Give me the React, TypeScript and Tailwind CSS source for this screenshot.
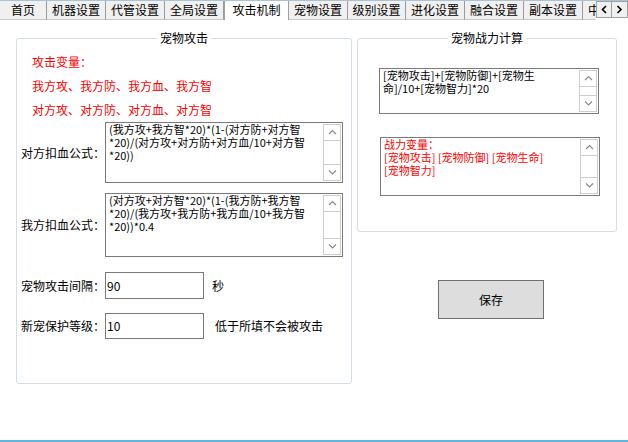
import React from "react";

const tabs: { label: string; w: string; active?: boolean }[] = [
  { label: "首页", w: "w-[47px]" },
  { label: "机器设置", w: "w-[59px]" },
  { label: "代管设置", w: "w-[59px]" },
  { label: "全局设置", w: "w-[59px]" },
  { label: "攻击机制", w: "w-[65px]", active: true },
  { label: "宠物设置", w: "w-[59px]" },
  { label: "级别设置", w: "w-[58px]" },
  { label: "进化设置", w: "w-[59px]" },
  { label: "融合设置", w: "w-[59px]" },
  { label: "副本设置", w: "w-[59px]" },
];

function Chevron({ dir }: { dir: "up" | "down" | "left" | "right" }) {
  const d = {
    up: "M1 5 L4.5 1.5 L8 5",
    down: "M1 1.5 L4.5 5 L8 1.5",
    left: "M5 1 L1.5 4.5 L5 8",
    right: "M1.5 1 L5 4.5 L1.5 8",
  }[dir];
  const vertical = dir === "up" || dir === "down";
  return (
    <svg
      width={vertical ? 9 : 7}
      height={vertical ? 7 : 9}
      viewBox={vertical ? "0 0 9 7" : "0 0 7 9"}
      fill="none"
      stroke={vertical ? "#8a8a8a" : "#000"}
      strokeWidth={vertical ? 1.2 : 1.6}
    >
      <path d={d} />
    </svg>
  );
}

// textarea look-alike with a classic vertical scrollbar
function ScrollBox({
  lines,
  className,
  red,
}: {
  lines: string[];
  className: string;
  red?: boolean;
}) {
  return (
    <div className={`flex shrink-0 border border-[#7a7a7a] bg-white ${className}`}>
      <div
        className={`flex-1 min-w-0 overflow-hidden pl-[3px] text-[11px] leading-[13px] ${
          red ? "text-[#ff0000]" : "text-black"
        }`}
      >
        {lines.map((l, i) => (
          <div key={i} className="whitespace-pre">
            {l}
          </div>
        ))}
      </div>
      <div className="w-[18px] shrink-0 flex flex-col border border-[#cdcdcd] m-px">
        <div className="h-[16px] flex items-center justify-center border-b border-[#cdcdcd]">
          <Chevron dir="up" />
        </div>
        <div className="flex-1" />
        <div className="h-[16px] flex items-center justify-center border-t border-[#cdcdcd]">
          <Chevron dir="down" />
        </div>
      </div>
    </div>
  );
}

function Label({ children }: { children: React.ReactNode }) {
  return (
    <div className="w-[88px] shrink-0 flex justify-end whitespace-nowrap">{children}</div>
  );
}

export default function App() {
  return (
    <div className="w-[628px] h-[442px] bg-white flex flex-col overflow-hidden font-['Noto_Sans_CJK_SC','Noto_Sans',sans-serif] text-[12px] text-black">
      {/* Tabs */}
      <div className="h-[20px] flex shrink-0 border-t border-[#a9c3d6]">
        {tabs.map((t) => (
          <div
            key={t.label}
            className={`${t.w} shrink-0 text-center text-[12px] ${
              t.active
                ? "h-[19px] leading-[18px] bg-white border-x border-[#a0a0a0]"
                : "h-[19px] leading-[18px] bg-[#f0f0f0] border-r border-[#9a9a9a] border-b border-b-[#c8c8c8]"
            }`}
          >
            {t.label}
          </div>
        ))}
        <div className="w-[13px] shrink-0 h-[19px] overflow-hidden bg-[#f0f0f0] border-b border-[#c8c8c8] pl-[5px] leading-[18px] whitespace-nowrap">
          中
        </div>
        <div className="w-[16px] h-[17px] shrink-0 flex items-center justify-center bg-[#f0f0f0] border border-[#a0a0a0]">
          <Chevron dir="left" />
        </div>
        <div className="w-[16px] h-[17px] shrink-0 flex items-center justify-center bg-[#f0f0f0] border border-[#a0a0a0] border-l-0">
          <Chevron dir="right" />
        </div>
      </div>

      {/* Page */}
      <div className="flex-1 flex items-start pt-[10px] pl-[16px]">
        <fieldset className="w-[336px] h-[354px] border border-[#d5dfe5] rounded-[3px]">
          <legend className="mx-auto px-[3px] leading-[16px]">宠物攻击</legend>
          <div className="pt-[4px] pl-[15px] text-[#ff0000]">
            <div className="h-[24px] leading-[24px]">攻击变量：</div>
            <div className="h-[24px] leading-[24px]">我方攻、我方防、我方血、我方智</div>
            <div className="h-[24px] leading-[24px]">对方攻、对方防、对方血、对方智</div>
          </div>

          <div className="flex items-center">
            <Label>对方扣血公式：</Label>
            <ScrollBox
              className="w-[238px] h-[61px]"
              lines={[
                "(我方攻+我方智*20)*(1-(对方防+对方智",
                "*20)/(对方攻+对方防+对方血/10+对方智",
                "*20))",
              ]}
            />
          </div>

          <div className="flex items-center mt-[10px]">
            <Label>我方扣血公式：</Label>
            <ScrollBox
              className="w-[238px] h-[64px]"
              lines={[
                "(对方攻+对方智*20)*(1-(我方防+我方智",
                "*20)/(我方攻+我方防+我方血/10+我方智",
                "*20))*0.4",
              ]}
            />
          </div>

          <div className="flex items-center mt-[15px]">
            <Label>宠物攻击间隔：</Label>
            <div className="w-[99px] h-[27px] shrink-0 border border-[#7a7a7a] pl-[1px] leading-[25px]">90</div>
            <div className="ml-[8px]">秒</div>
          </div>

          <div className="flex items-center mt-[14px]">
            <Label>新宠保护等级：</Label>
            <div className="w-[99px] h-[26px] shrink-0 border border-[#7a7a7a] pl-[1px] leading-[24px]">10</div>
            <div className="ml-[11px]">低于所填不会被攻击</div>
          </div>
        </fieldset>

        <div className="flex flex-col ml-[5px]">
          <fieldset className="w-[260px] h-[202px] border border-[#d5dfe5] rounded-[3px]">
            <legend className="mx-auto px-[3px] leading-[16px]">宠物战力计算</legend>
            <ScrollBox
              className="mt-[22px] ml-[21px] w-[220px] h-[46px]"
              lines={["[宠物攻击]+[宠物防御]+[宠物生", "命]/10+[宠物智力]*20"]}
            />
            <ScrollBox
              red
              className="mt-[23px] ml-[22px] w-[220px] h-[59px]"
              lines={["战力变量：", "[宠物攻击] [宠物防御] [宠物生命]", "[宠物智力]"]}
            />
          </fieldset>
          <button className="mt-[48px] ml-[81px] w-[106px] h-[39px] bg-[#dddddd] border border-[#707070] text-[12px]">
            保存
          </button>
        </div>
      </div>

      <div className="h-[2px] shrink-0 bg-[#62b6dd]" />
    </div>
  );
}
